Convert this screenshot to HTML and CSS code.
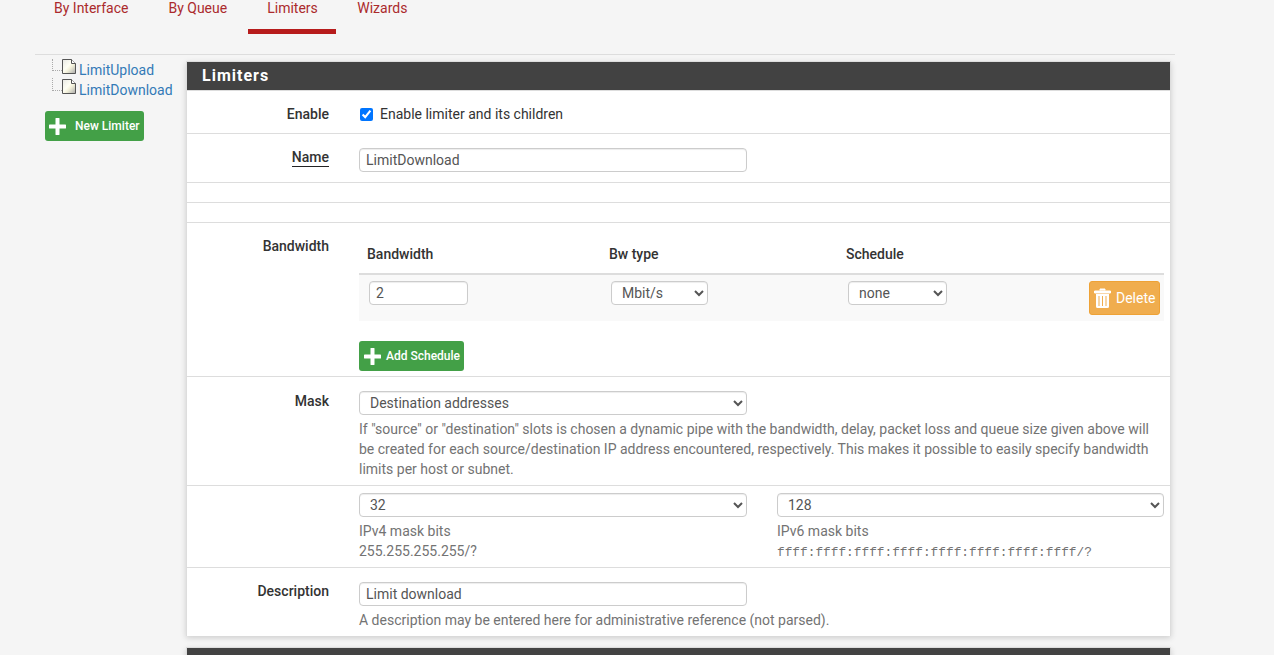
FILE: index.html
```html
<!DOCTYPE html>
<html lang="en">
<head>
<meta charset="utf-8">
<title>Limiters</title>
<link rel="stylesheet" href="styles.css">
</head>
<body>
<nav class="tabs">
  <a class="tab" href="#">By Interface</a>
  <a class="tab" href="#">By Queue</a>
  <a class="tab active" href="#">Limiters</a>
  <a class="tab" href="#">Wizards</a>
</nav>
<div class="wrap">
  <div class="layout">
    <aside class="side">
      <ul class="tree">
        <li class="tree-item"><span class="branch"></span><svg class="doc" width="14" height="15" viewBox="0 0 14 15"><defs><linearGradient id="docfill" x1="0" y1="0" x2="1" y2="1"><stop offset="0" stop-color="#e8e8e4"/><stop offset=".45" stop-color="#fffff4"/><stop offset=".6" stop-color="#f4f2dc"/><stop offset="1" stop-color="#a8a8a8"/></linearGradient></defs><path d="M.5.5h9l4 4v10H.5z" fill="url(#docfill)" stroke="#555"/><path d="M9.500.5v4h4" fill="#fff" stroke="#555"/></svg><a href="#">LimitUpload</a></li>
        <li class="tree-item"><span class="branch"></span><svg class="doc" width="14" height="15" viewBox="0 0 14 15"><path d="M.5.5h9l4 4v10H.5z" fill="url(#docfill)" stroke="#555"/><path d="M9.500.5v4h4" fill="#fff" stroke="#555"/></svg><a href="#">LimitDownload</a></li>
      </ul>
      <a class="btn btn-green btn-new" href="#"><svg class="plus" width="17" height="17" viewBox="0 0 17 17"><path d="M8.500 1v15M1 8.500h15" stroke="#fff" stroke-width="4" stroke-linecap="round"/></svg><span>New Limiter</span></a>
    </aside>
    <main class="main">
      <section class="panel">
        <h2 class="panel-head">Limiters</h2>
        <div class="row row-enable">
          <div class="label">Enable</div>
          <label class="check"><input type="checkbox" checked><span>Enable limiter and its children</span></label>
        </div>
        <div class="row row-name">
          <div class="label"><span class="req">Name</span></div>
          <div class="half"><input class="field" type="text" value="LimitDownload"></div>
        </div>
        <div class="row row-empty"></div>
        <div class="row row-empty"></div>
        <div class="row row-bw">
          <div class="label label-bw">Bandwidth</div>
          <div class="bw">
            <div class="bw-grid bw-head">
              <div>Bandwidth</div><div>Bw type</div><div>Schedule</div><div></div>
            </div>
            <div class="bw-grid bw-body">
              <div><input class="field field-bw" type="text" value="2"></div>
              <div><select class="sel sel-small"><option>Mbit/s</option></select></div>
              <div><select class="sel sel-sched"><option>none</option></select></div>
              <div class="bw-del"><a class="btn btn-orange" href="#"><svg class="trash" width="17" height="20" viewBox="0 0 17 20"><path d="M6 2.500V1h5v1.500M.5 3h16v2H.5z" fill="#fff" stroke="#fff"/><path fill-rule="evenodd" d="M2 6h13v12.500a1.500 1.500 0 0 1-1.500 1.500h-10A1.500 1.500 0 0 1 2 18.500zM4.500 8v10h1V8zM8 8v10h1V8zM11.500 8v10h1V8z" fill="#fff"/></svg><span>Delete</span></a></div>
            </div>
            <a class="btn btn-green btn-add" href="#"><svg class="plus" width="17" height="17" viewBox="0 0 17 17"><path d="M8.500 1v15M1 8.500h15" stroke="#fff" stroke-width="4" stroke-linecap="round"/></svg><span>Add Schedule</span></a>
          </div>
        </div>
        <div class="row row-mask">
          <div class="label">Mask</div>
          <div class="mask">
            <select class="sel sel-half"><option>Destination addresses</option></select>
            <p class="help">If "source" or "destination" slots is chosen a dynamic pipe with the bandwidth, delay, packet loss and queue size given above will be created for each source/destination IP address encountered, respectively. This makes it possible to easily specify bandwidth limits per host or subnet.</p>
          </div>
        </div>
        <div class="row row-bits">
          <div class="label"></div>
          <div class="bits">
            <div>
              <select class="sel sel-full"><option>32</option></select>
              <p class="help help-bits">IPv4 mask bits<br>255.255.255.255/?</p>
            </div>
            <div>
              <select class="sel sel-full"><option>128</option></select>
              <p class="help help-bits">IPv6 mask bits<br><span class="mono">ffff:ffff:ffff:ffff:ffff:ffff:ffff:ffff/?</span></p>
            </div>
          </div>
        </div>
        <div class="row row-desc">
          <div class="label">Description</div>
          <div class="half">
            <input class="field" type="text" value="Limit download">
            <p class="help help-desc">A description may be entered here for administrative reference (not parsed).</p>
          </div>
        </div>
      </section>
      <section class="panel panel-next">
        <h2 class="panel-head panel-head-next"></h2>
      </section>
    </main>
  </div>
</div>
</body>
</html>
```

FILE: styles.css
```css
* { box-sizing: border-box; }
html, body { height: 655px; overflow: hidden; }
body {
  margin: 0;
  background: #f5f5f5;
  color: #333;
  font: 14px/20px Roboto, "Liberation Sans", sans-serif;
}
a { text-decoration: none; }

.tabs {
  display: flex;
  gap: 2px;
  height: 34px;
  padding-left: 35px;
}
.tab {
  height: 34px;
  padding: 0 19px;
  color: #ab2a2c;
  line-height: 17px;
}
.tab.active { border-bottom: 5px solid #b71c1c; padding-right: 18.500px; }

.wrap {
  margin: 20px 99px 0 35px;
  border-top: 1px solid #ddd;
}
.layout {
  display: flex;
  padding-top: 6px;
}

.side { width: 151px; flex: none; padding: 1px 0 0 10px; }
.tree {
  list-style: none;
  margin: -3px 0 0;
  padding: 0 0 0 7px;
}
.tree-item {
  display: flex;
  align-items: flex-start;
  height: 20px;
  line-height: 20px;
}
.branch {
  width: 10px;
  height: 12px;
  border-left: 1px dotted #aaa;
  border-bottom: 1px dotted #aaa;
}
.tree-item + .tree-item .branch { height: 13px; margin-top: -1px; }
.doc { flex: none; margin: 0 3px 0 0; }
.tree-item a { color: #337ab7; padding-top: 1px; line-height: 20px; }

.btn {
  display: inline-flex;
  align-items: center;
  border-radius: 3px;
  color: #fff;
  font-size: 12px;
  font-weight: 500;
}
.btn-green { background: #43a047; }
.btn-new { width: 99px; height: 30px; margin-top: 12px; padding-left: 4px; gap: 9px; }
.btn-add { display: flex; width: 105px; height: 30px; margin-top: 20px; padding-left: 5px; gap: 5px; }
.btn-orange {
  width: 71px;
  height: 34px;
  padding-left: 4px;
  gap: 5px;
  background: #f0ad4e;
  border: 1px solid #eea236;
  font-size: 14px;
  font-weight: 400;
}

.main { flex: 1; min-width: 0; }
.panel {
  width: 985px;
  background: #fff;
  border-top: 1px solid #ddd;
  border-left: 1px solid #ddd;
  border-right: 1px solid #ddd;
  box-shadow: 0 2px 6px rgba(0, 0, 0, .16);
}
.panel-head {
  margin: 0;
  height: 29px;
  padding-left: 15px;
  background: #424242;
  color: #fff;
  font-size: 16px;
  font-weight: 700;
  letter-spacing: 1px;
  line-height: 28px;
  border-bottom: 1px solid #ddd;
}
.panel-next { margin-top: 11px; }
.panel-head-next { border: 0; }

.row {
  display: flex;
  border-bottom: 1px solid #ddd;
}
.row:last-child { border-bottom: 0; }
.label {
  width: 142px;
  flex: none;
  text-align: right;
  font-weight: 500;
  padding-top: 13px;
}
.row-enable { height: 43px; }
.row-name { height: 49px; }
.row-empty { height: 20px; }
.row-bw { height: 154px; }
.row-mask { height: 109px; }
.row-bits { height: 82px; }
.row-desc { height: 68px; }
.row-mask .label { padding-top: 14px; }

.req { display: inline-block; border-bottom: 1px solid #222; line-height: 18px; }

.check {
  display: flex;
  align-self: flex-start;
  align-items: center;
  margin: 2px 0 0 31px;
  height: 42px;
  color: #333;
}
.check input { width: 13px; height: 13px; margin: 1px 7px 0 0; accent-color: #0075ff; }

.half { width: 388px; margin-left: 30px; }
.row-name .half { padding-top: 14px; }
.row-desc .half { padding-top: 14px; }

.field, .sel {
  display: block;
  height: 24px;
  border: 1px solid #ccc;
  border-radius: 4px;
  background: #fff;
  color: #555;
  font: 14px Roboto, "Liberation Sans", sans-serif;
  box-shadow: inset 0 1px 1px rgba(0, 0, 0, .075);
}
.field { width: 100%; padding: 0 6px; }
.field-bw { width: 99px; }
.sel { padding: 0 6px; }
.sel-small { width: 97px; }
.sel-sched { width: 99px; }
.sel-half { width: 388px; }
.sel-full { width: 100%; }

.bw { width: 805px; margin-left: 30px; padding-top: 14px; }
.bw-grid {
  display: grid;
  grid-template-columns: 242px 237px 1fr 80px;
}
.bw-head {
  height: 38px;
  padding: 7px 0 0 8px;
  font-weight: 500;
  border-bottom: 2px solid #ddd;
}
.bw-body {
  height: 46px;
  padding: 6px 0 0 10px;
  background: #f9f9f9;
}
.bw-del { display: flex; justify-content: flex-end; padding-right: 4px; }

.mask { width: 805px; margin-left: 30px; padding-top: 14px; }
.help {
  margin: 4px 0 0;
  color: #737373;
  font-size: 14px;
  line-height: 20px;
}
.bits {
  display: grid;
  grid-template-columns: 388px 387px;
  gap: 30px;
  margin-left: 30px;
  padding-top: 7px;
}
.help-bits { margin-top: 4px; }
.mono { font-family: "Liberation Mono", monospace; font-size: 12.800px; }
.help-desc { white-space: nowrap; }
```
